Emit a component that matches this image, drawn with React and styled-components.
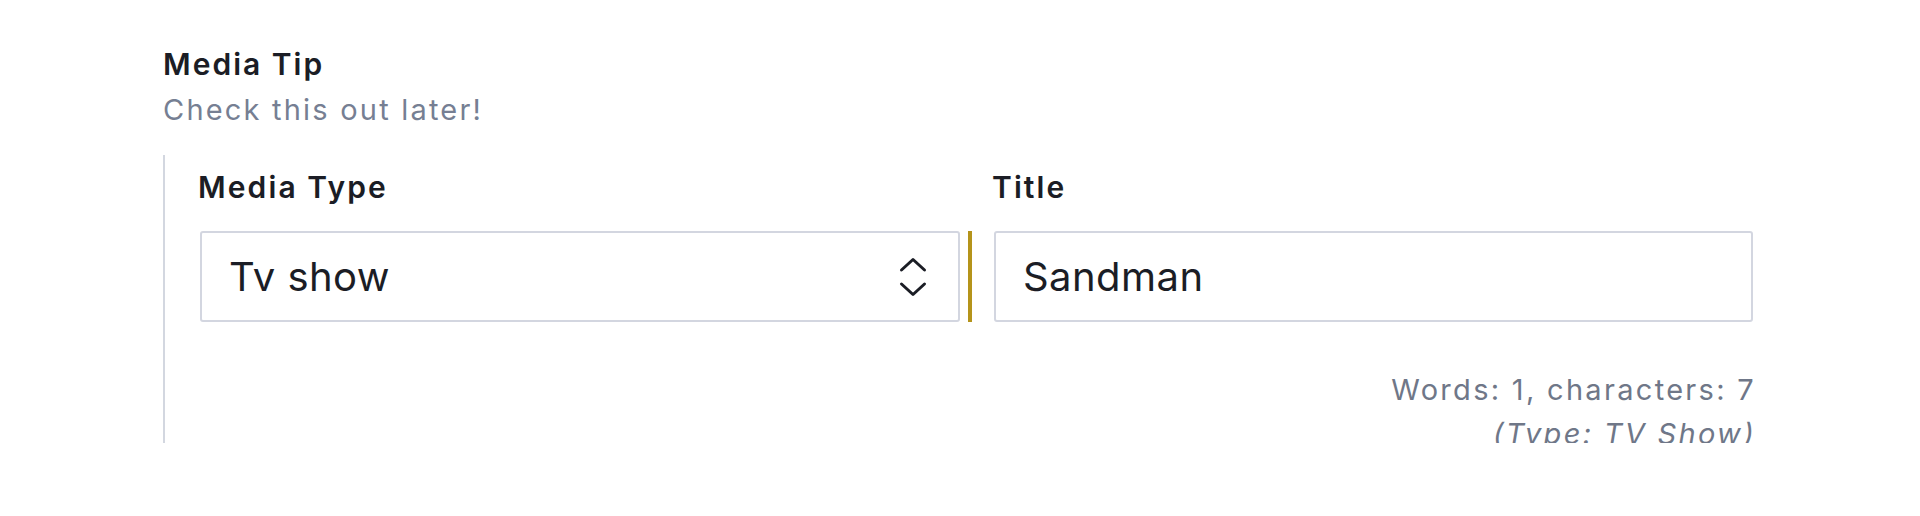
import React from "react";
import styled, { createGlobalStyle } from "styled-components";

const GlobalStyle = createGlobalStyle`
  html, body {
    margin: 0;
    padding: 0;
    background: #ffffff;
  }
  body {
    font-family: Inter, "Noto Sans", sans-serif;
    color: #1b1d25;
    -webkit-font-smoothing: antialiased;
  }
`;

const Page = styled.div`
  padding: 44px 0 0 163px;
  width: 1600px;
`;

const FieldHeader = styled.div`
  display: flex;
  flex-direction: column;
  gap: 6px;
`;

const FieldTitle = styled.div`
  font-size: 30px;
  font-weight: 600;
  line-height: 40px;
  letter-spacing: 2px;
  color: #1b1d25;
`;

const FieldDescription = styled.div`
  font-size: 29px;
  line-height: 40px;
  letter-spacing: 2.2px;
  color: #767f93;
`;

const Fieldset = styled.div`
  margin-top: 25px;
  border-left: 2px solid #d3d7e0;
  padding: 14px 0 0 35px;
  height: 288px;
  box-sizing: border-box;
`;

const Grid = styled.div`
  display: grid;
  grid-template-columns: 760px 759px;
  column-gap: 34px;
`;

const Field = styled.div`
  position: relative;
  display: flex;
  flex-direction: column;
  gap: 26px;
`;

const Label = styled.label`
  margin-left: -2px;
  font-size: 30px;
  font-weight: 600;
  line-height: 36px;
  letter-spacing: 2.1px;
  color: #1b1d25;
`;

const Control = styled.div`
  position: relative;
  display: flex;
  align-items: center;
  height: 91px;
  box-sizing: border-box;
  border: 2px solid #d3d6e0;
  border-radius: 3px;
  background: #ffffff;
  padding: 0 ${(p) => p.$padRight}px 0 27px;
  font-size: 40px;
  letter-spacing: 0.45px;
  color: #1b1d25;
`;

const ControlText = styled.span`
  flex: 1;
`;

const ChangeBar = styled.div`
  position: absolute;
  bottom: 0;
  right: -12px;
  width: 4px;
  height: 91px;
  background: ${(p) => p.$color};
`;

const Footer = styled.div`
  display: flex;
  flex-direction: column;
  align-items: flex-end;
  margin-top: 46px;
  width: 1556px;
  font-size: 29px;
  line-height: 44px;
  letter-spacing: 2.3px;
  color: #6f7788;
`;

const Meta = styled.span`
  font-style: ${(p) => (p.$italic ? "italic" : "normal")};
`;

const Chevrons = () => (
  <svg width="28" height="42" viewBox="0 0 28 42" fill="none">
    <path
      d="M2.5 14 L14 3.5 L25.5 14 M2.5 28 L14 38.5 L25.5 28"
      stroke="#1b1d25"
      strokeWidth="3"
      strokeLinecap="round"
      strokeLinejoin="round"
    />
  </svg>
);

export default function App() {
  return (
    <>
      <GlobalStyle />
      <Page>
        <FieldHeader>
          <FieldTitle>Media Tip</FieldTitle>
          <FieldDescription>Check this out later!</FieldDescription>
        </FieldHeader>
        <Fieldset>
          <Grid>
            <Field>
              <Label>Media Type</Label>
              <Control $padRight={31}>
                <ControlText>Tv show</ControlText>
                <Chevrons />
              </Control>
              <ChangeBar $color="#b5941a" />
            </Field>
            <Field>
              <Label>Title</Label>
              <Control $padRight={28}>
                <ControlText>Sandman</ControlText>
              </Control>
            </Field>
          </Grid>
          <Footer>
            <Meta>Words: 1, characters: 7</Meta>
            <Meta $italic>(Type: TV Show)</Meta>
          </Footer>
        </Fieldset>
      </Page>
    </>
  );
}
